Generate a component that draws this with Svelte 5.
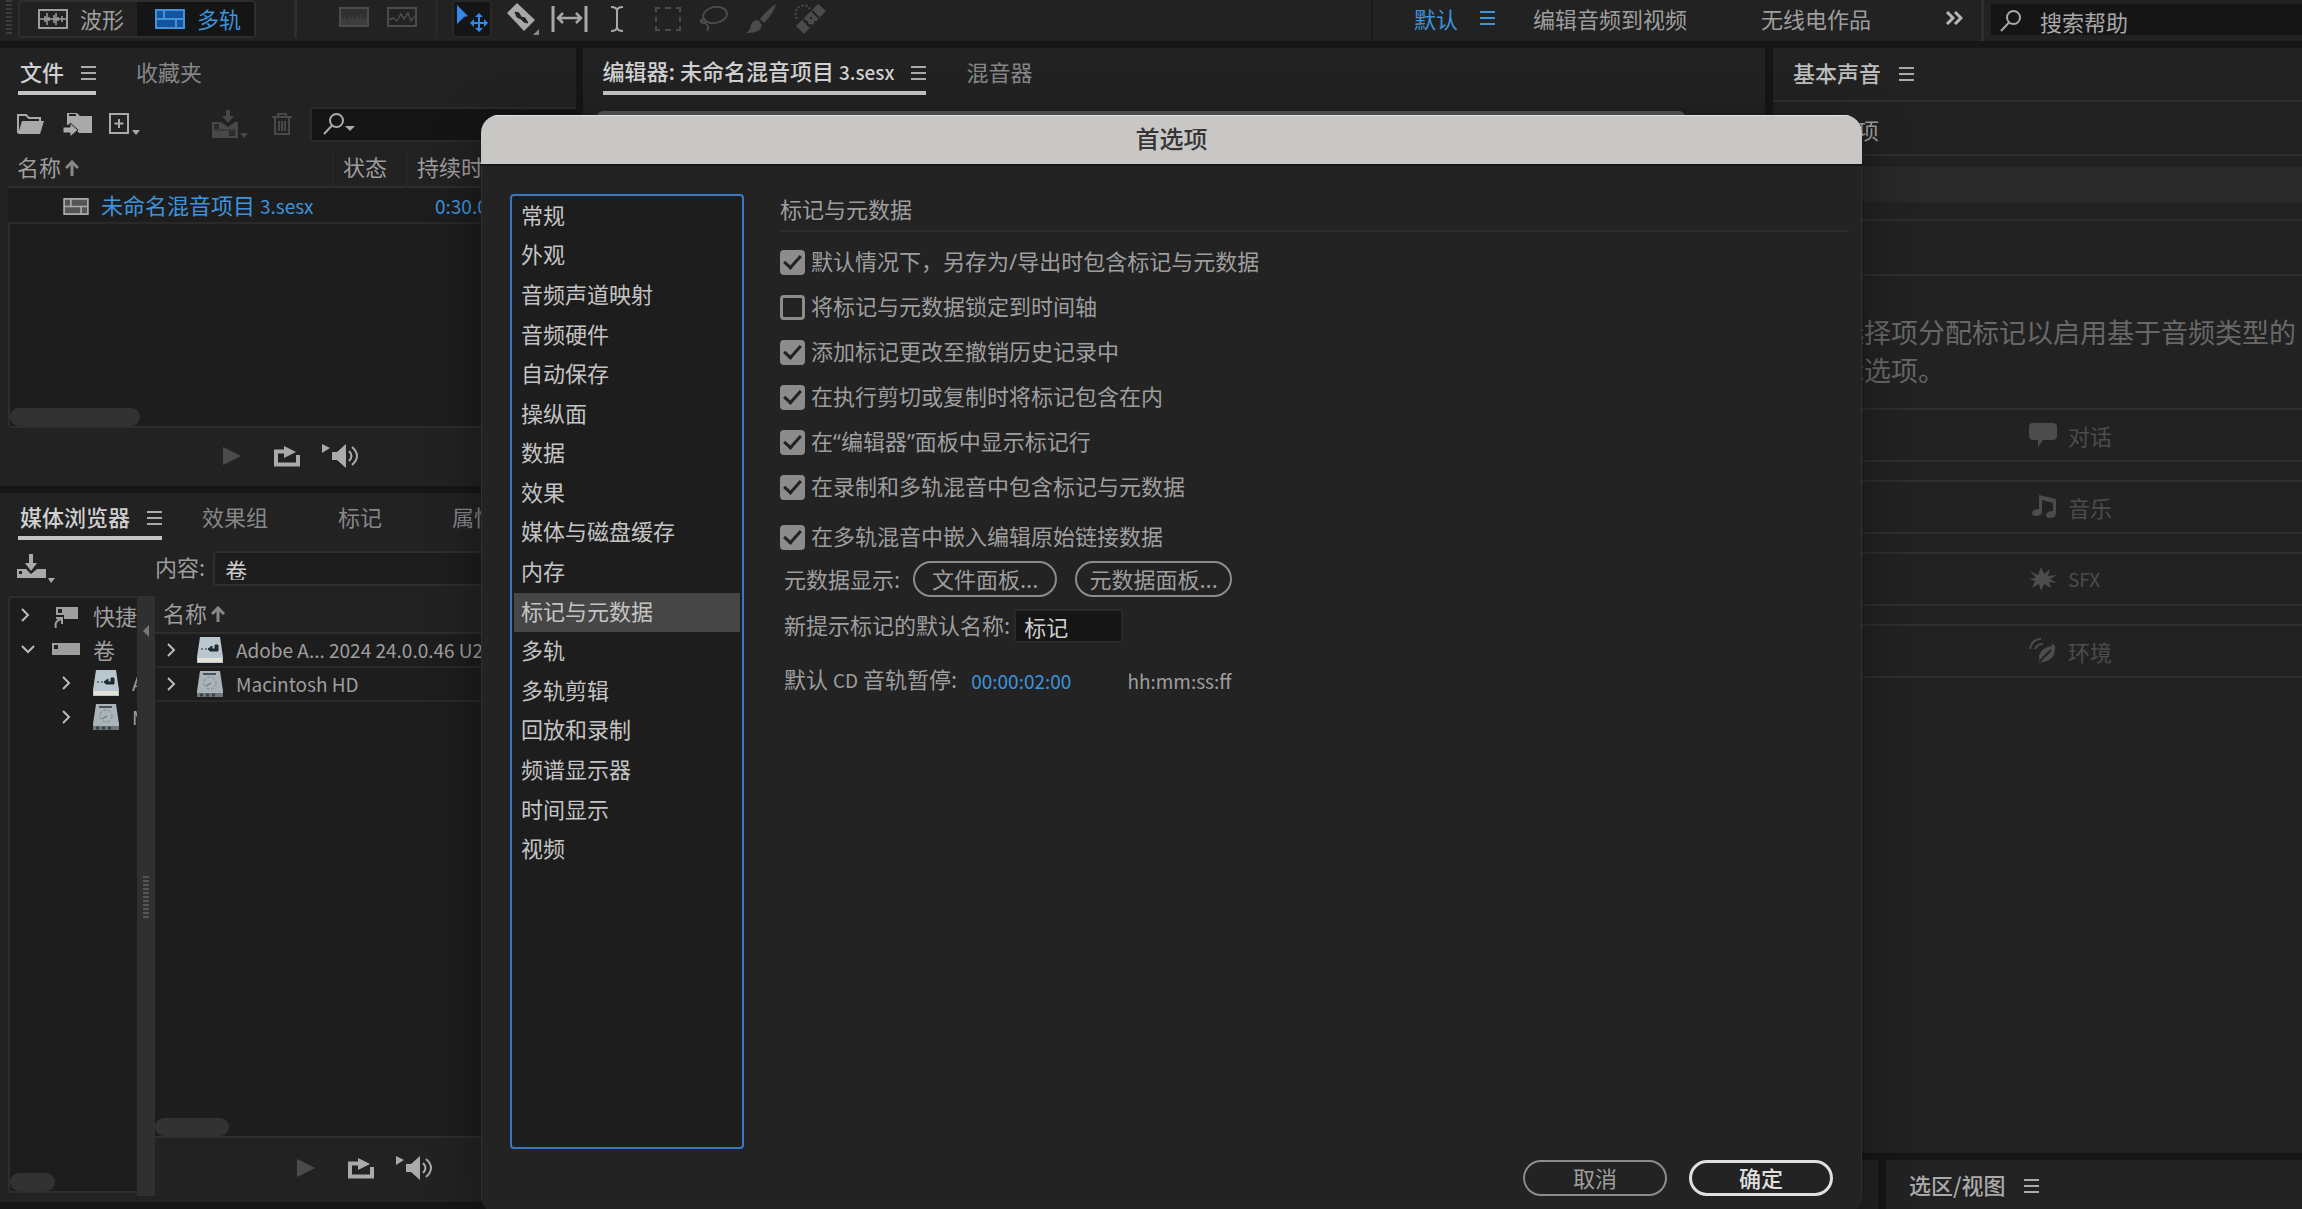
<script lang="ts">
	// Audio workstation window with the preferences dialog open
	interface Option {
		id: string;
		text: string;
		checked: boolean;
	}

	const categories = [
		'常规',
		'外观',
		'音频声道映射',
		'音频硬件',
		'自动保存',
		'操纵面',
		'数据',
		'效果',
		'媒体与磁盘缓存',
		'内存',
		'标记与元数据',
		'多轨',
		'多轨剪辑',
		'回放和录制',
		'频谱显示器',
		'时间显示',
		'视频'
	];

	let selected = $state('标记与元数据');

	let options: Option[] = $state([
		{ id: 'save-markers', text: '默认情况下，另存为/导出时包含标记与元数据', checked: true },
		{ id: 'lock-timeline', text: '将标记与元数据锁定到时间轴', checked: false },
		{ id: 'undo-history', text: '添加标记更改至撤销历史记录中', checked: true },
		{ id: 'cut-copy', text: '在执行剪切或复制时将标记包含在内', checked: true },
		{ id: 'marker-row', text: '在“编辑器”面板中显示标记行', checked: true },
		{ id: 'record-mixdown', text: '在录制和多轨混音中包含标记与元数据', checked: true },
		{ id: 'embed-link', text: '在多轨混音中嵌入编辑原始链接数据', checked: true }
	]);

	let markerName = $state('标记');

	const soundTypes = [
		{ icon: 'dialogue', label: '对话' },
		{ icon: 'music', label: '音乐' },
		{ icon: 'sfx', label: 'SFX' },
		{ icon: 'ambience', label: '环境' }
	];
</script>

{#snippet menu()}
	<svg class="menu" width="15" height="14" viewBox="0 0 15 14" stroke="currentColor" stroke-width="2">
		<path d="M0 1h15M0 7h15M0 13h15" />
	</svg>
{/snippet}

{#snippet tracks(fill: string)}
	<svg width="30" height="20" viewBox="0 0 30 20">
		<rect width="30" height="20" fill="currentColor" />
		<path d="M2 2h6v7H2zM10 2h18v7H10zM2 11h18v7H2zM22 11h6v7h-6z" {fill} />
	</svg>
{/snippet}

{#snippet magnifier()}
	<svg width="22" height="22" viewBox="0 0 22 22" fill="none" stroke="currentColor" stroke-width="2">
		<circle cx="13.500" cy="7.500" r="6.500" />
		<path d="M9 12.500 1 21" />
	</svg>
{/snippet}

{#snippet sortArrow()}
	<svg class="sort" width="14" height="16" viewBox="0 0 14 16" fill="none" stroke="currentColor" stroke-width="3">
		<path d="M7 16V2M1 8l6-6 6 6" />
	</svg>
{/snippet}

{#snippet chevron(open: boolean)}
	<svg class="chevron" width="14" height="14" viewBox="0 0 14 14" fill="none" stroke="currentColor" stroke-width="2">
		{#if open}
			<path d="M1 4l6 6 6-6" />
		{:else}
			<path d="M1 1l6 6-6 6" />
		{/if}
	</svg>
{/snippet}

{#snippet disk(kind: string)}
	<svg class="disk" width="26" height="27" viewBox="0 0 26 27">
		<path d="M3 0h20l3 20v6H0v-6z" fill={kind === 'image' ? '#b9c6cd' : '#a9b3b8'} />
		{#if kind === 'image'}
			<path d="M1 21h24v4H1z" fill="#e4e3d6" />
			<path d="M4 12h2M8 12h2M11 12l4-3v3h3V8h3v6h-8z" fill="#1d2b33" stroke="#1d2b33" />
		{:else}
			<path d="M6 3h13" stroke="#4b5357" stroke-width="2" />
			<circle cx="13" cy="12" r="6" fill="none" stroke="#7c898f" stroke-dasharray="3 2" />
			<path d="M9 15l5-3" stroke="#5b666b" />
			<path d="M0 22h26v4H0z" fill="#6c767b" />
			<path d="M3 24h3M9 24h3M15 24h3" stroke="#3a4246" stroke-width="3" />
		{/if}
	</svg>
{/snippet}

{#snippet transport()}
	<button aria-label="播放" class="dim">
		<svg width="18" height="18" viewBox="0 0 18 18" fill="currentColor"><path d="M0 0l18 9-18 9z" /></svg>
	</button>
	<button aria-label="循环播放" class="loop">
		<svg width="26" height="21" viewBox="0 0 26 21">
			<path d="M11 5.500H2v13h22V9" fill="none" stroke="currentColor" stroke-width="4" />
			<path d="M10 0l12 6-12 6z" fill="currentColor" />
		</svg>
	</button>
	<button aria-label="自动播放">
		<svg width="38" height="24" viewBox="0 0 38 24" fill="currentColor">
			<path d="M0 0l8 4-8 5zM10 8h5l9-8v24l-9-8h-5z" />
			<path d="M27 7q5 5 0 10M30 3q10 9 0 18" fill="none" stroke="currentColor" stroke-width="2" />
		</svg>
	</button>
{/snippet}

<div class="app">
	<header class="topbar">
		<span class="grip"></span>
		<div class="modes">
			<button>
				<svg width="30" height="20" viewBox="0 0 30 20" fill="none" stroke="currentColor">
					<path d="M1 1h28v18H1z" stroke-width="2" />
					<path d="M2 10h26M7 7v6M9 4v12M11 8v4M16 6v8M18 4v12M20 8v4M24 7v6" stroke-width="1.500" />
				</svg>
				<span>波形</span>
			</button>
			<button class="on">
				{@render tracks('#17539a')}
				<span>多轨</span>
			</button>
		</div>
		<div class="views">
			<svg width="30" height="20" viewBox="0 0 30 20">
				<path d="M1 1h28v18H1z" fill="#3d3d3d" stroke="currentColor" stroke-width="2" />
				<path d="M2 2h26v5l-2 6-1-5-2 6-1-7-2 5-2-5-2 7-2-7-2 6-2-4-2 5-2-6-2 5-2-4z" fill="#303030" />
			</svg>
			<svg width="30" height="20" viewBox="0 0 30 20" fill="none" stroke="currentColor">
				<path d="M1 1h28v18H1z" stroke-width="2" />
				<path d="M2 13l4-2 4 3 4-7 3 5 4-6 3 8 3-4h2" stroke-width="1.500" />
			</svg>
		</div>
		<div class="tools">
			<button class="tool move" aria-label="移动工具">
				<svg width="32" height="28" viewBox="0 0 32 28" fill="currentColor">
					<path d="M1 0l11 11-4 1-7 7zM23 8l4 4h-3v5h4v-3l4 4-4 4v-3h-4v4h3l-4 4-4-4h3v-4h-4v3l-4-4 4-4v3h4v-5h-3z" />
				</svg>
			</button>
			<button class="tool" aria-label="切断工具">
				<svg width="34" height="32" viewBox="0 0 34 32">
					<path d="M10 0l18 17-11 11L0 10z" fill="currentColor" />
					<path d="M8 9l4 1 2 4 4 1 3 5-4-1-3-3-4-2z" fill="#222" stroke="#222" />
					<path d="M32 26v6h-6z" fill="#888" />
				</svg>
			</button>
			<button class="tool" aria-label="滑动工具">
				<svg width="37" height="26" viewBox="0 0 37 26" fill="none" stroke="currentColor" stroke-width="2">
					<path d="M2 0v26M35 0v26" stroke-width="3" />
					<path d="M7 12h23M12 7l-5 5 5 5M25 7l5 5-5 5" stroke-width="2.500" />
				</svg>
			</button>
			<button class="tool" aria-label="时间选择工具">
				<svg width="14" height="26" viewBox="0 0 14 26" fill="none" stroke="currentColor" stroke-width="2">
					<path d="M1 1q6 0 6 4 0-4 6-4M7 4v18M1 25q6 0 6-4 0 4 6 4" />
				</svg>
			</button>
			<button class="tool off" aria-label="框选工具">
				<svg width="26" height="24" viewBox="0 0 26 24" fill="none" stroke="currentColor" stroke-width="2">
					<path d="M1 5V1h4M10 1h6M21 1h4v4M25 10v5M25 19v4h-4M16 23h-6M5 23H1v-4M1 15v-5" />
				</svg>
			</button>
			<button class="tool off" aria-label="套索选择工具">
				<svg width="29" height="26" viewBox="0 0 29 26" fill="none" stroke="currentColor" stroke-width="2">
					<ellipse cx="16" cy="9" rx="12" ry="8" transform="rotate(-10 16 9)" />
					<path d="M3 13q-3 3 1 4 4 0 2-3-3-1-3 2M6 17q5 3 2 8" />
				</svg>
			</button>
			<button class="tool off" aria-label="画笔选择工具">
				<svg width="30" height="30" viewBox="0 0 30 30" fill="currentColor">
					<path d="M30 0q-2 9-12 19l-4-4Q22 5 30 0zM12 16l4 5q-2 9-16 8 4-2 5-8 2-5 7-5z" />
				</svg>
			</button>
			<button class="tool off" aria-label="污点修复工具">
				<svg width="32" height="30" viewBox="0 0 32 30">
					<path d="M24 0l8 7L10 30l-8-8z" fill="currentColor" />
					<path d="M18 7l7 7M9 15l7 8" stroke="#222" stroke-width="2" />
					<path d="M17 13v2M21 17v2M13 17v2M17 20v2" stroke="#222" stroke-width="2" />
					<path d="M3 15Q-1 5 7 2q6-2 9 3" fill="none" stroke="currentColor" stroke-width="2" stroke-dasharray="2 2" />
				</svg>
			</button>
		</div>
		<nav class="workspaces">
			<button class="current">默认 {@render menu()}</button>
			<button>编辑音频到视频</button>
			<button>无线电作品</button>
			<button aria-label="更多工作区" class="more">
				<svg width="18" height="14" viewBox="0 0 18 14" fill="none" stroke="currentColor" stroke-width="3">
					<path d="M2 1l6 6-6 6M10 1l6 6-6 6" />
				</svg>
			</button>
		</nav>
		<label class="help">
			{@render magnifier()}
			<input type="text" placeholder="搜索帮助" aria-label="搜索帮助" />
		</label>
	</header>

	<main class="workspace">
		<div class="left">
			<section class="panel files">
				<div class="tabs">
					<button class="tab active"><span>文件</span> {@render menu()}</button>
					<button class="tab">收藏夹</button>
				</div>
				<div class="toolbar">
					<button aria-label="打开文件">
						<svg width="27" height="21" viewBox="0 0 27 21">
							<path d="M1 19V1h8l3 3h11v4" fill="none" stroke="currentColor" stroke-width="2" />
							<path d="M5 7h22l-4 13H1z" fill="currentColor" />
						</svg>
					</button>
					<button aria-label="导入文件" class="import">
						<svg width="30" height="25" viewBox="0 0 30 25">
							<path d="M4 1h10l3 3h12v17H16l-8-9-4 1z" fill="currentColor" />
							<path d="M6 3h7" stroke="#222" stroke-width="2" />
							<path d="M0 15h7v-4l8 7-8 7v-4H0z" fill="currentColor" stroke="#222" />
						</svg>
					</button>
					<button aria-label="新建文件" class="new">
						<svg width="31" height="22" viewBox="0 0 31 22">
							<path d="M1 1h18v19H1zM10 6v9M5.500 10.500h9" fill="none" stroke="currentColor" stroke-width="2" />
							<path d="M23 17h8l-4 5z" fill="currentColor" />
						</svg>
					</button>
					<button aria-label="插入到多轨混音中" class="insert" disabled>
						<svg width="36" height="28" viewBox="0 0 36 28">
							<path d="M0 12h9l7 5 7-5h3v16H0z" fill="currentColor" />
							<path d="M2 14h5v5H2zM17 21h6v5h-6z" fill="#2b2b2b" />
							<path d="M2 20h22" stroke="#2b2b2b" />
							<path d="M14 0h4v6h4l-6 7-6-7h4zM28 23h8l-4 5z" fill="currentColor" />
						</svg>
					</button>
					<button aria-label="删除" class="trash" disabled>
						<svg width="20" height="22" viewBox="0 0 20 22" fill="none" stroke="currentColor" stroke-width="2">
							<path d="M0 4h20M6 4V1h8v3M3 4v17h14V4M7 8v10M10 8v10M13 8v10" />
						</svg>
					</button>
					<label class="filter">
						{@render magnifier()}
						<span class="caret"></span>
						<input type="text" aria-label="筛选文件" />
					</label>
				</div>
				<table class="file-table">
					<thead>
						<tr>
							<th class="col-name">名称{@render sortArrow()}</th>
							<th class="col-status">状态</th>
							<th>持续时间</th>
						</tr>
					</thead>
					<tbody>
						<tr>
							<td class="session">
								<span class="file-icon">{@render tracks('#555')}</span>未命名混音项目
								<span class="latin">3.sesx</span>
							</td>
							<td></td>
							<td class="duration"><span class="latin">0:30.000</span></td>
						</tr>
					</tbody>
				</table>
				<div class="list-space"><span class="thumb"></span></div>
				<div class="transport">{@render transport()}</div>
			</section>

			<section class="panel media">
				<div class="tabs">
					<button class="tab active"><span>媒体浏览器</span> {@render menu()}</button>
					<button class="tab">效果组</button>
					<button class="tab wide">标记</button>
					<button class="tab wide">属性</button>
				</div>
				<div class="content-row">
					<button aria-label="添加快捷方式">
						<svg width="38" height="29" viewBox="0 0 38 29">
							<path d="M0 15h9l5 5 6-5h9v9H0z" fill="currentColor" />
							<path d="M12 0h4v9h4l-6 8-6-8h4z" fill="currentColor" />
							<path d="M2 17h3v3H2z" fill="#222" />
							<path d="M31 24h7l-4 5z" fill="currentColor" />
						</svg>
					</button>
					<label for="volume">内容:</label>
					<select id="volume">
						<option>卷</option>
					</select>
				</div>
				<div class="browser">
					<div class="tree-box">
						<ul class="tree">
							<li>
								{@render chevron(false)}
								<svg class="node shortcut" width="24" height="21" viewBox="0 0 24 21">
									<path d="M2 0h22v12H10V8H2z" fill="currentColor" />
									<path d="M4 2h4v4H4z" fill="#222" />
									<path d="M2 21q-2-7 5-9M2 11h6v6" fill="none" stroke="currentColor" stroke-width="2" />
								</svg>
								快捷方式
							</li>
							<li>
								{@render chevron(true)}
								<svg class="node" width="28" height="12" viewBox="0 0 28 12">
									<path d="M0 0h28v12H0z" fill="currentColor" />
									<path d="M2 2h4v4H2z" fill="#222" />
								</svg>
								卷
							</li>
							<li class="child">{@render chevron(false)}{@render disk('image')}<span class="latin">Adobe</span></li>
							<li class="child">{@render chevron(false)}{@render disk('drive')}<span class="latin">Macintosh HD</span></li>
						</ul>
						<span class="thumb"></span>
					</div>
					<div class="splitter">
						<svg width="6" height="12" viewBox="0 0 6 12"><path d="M6 0v12L0 6z" fill="#777" /></svg>
						<span class="grip"></span>
					</div>
					<div class="volumes">
						<table>
							<thead>
								<tr><th>名称{@render sortArrow()}</th></tr>
							</thead>
							<tbody>
								<tr>
									<td>
										<span class="cell">
											{@render chevron(false)}{@render disk('image')}
											<span class="latin">Adobe A... 2024 24.0.0.46 U2B</span>
										</span>
									</td>
								</tr>
								<tr>
									<td>
										<span class="cell">
											{@render chevron(false)}{@render disk('drive')}
											<span class="latin">Macintosh HD</span>
										</span>
									</td>
								</tr>
							</tbody>
						</table>
						<div class="list-space"><span class="thumb"></span></div>
						<div class="transport">{@render transport()}</div>
					</div>
				</div>
			</section>
		</div>

		<div class="right">
			<div class="upper">
				<section class="panel editor">
					<div class="tabs">
						<button class="tab active">
							<span>编辑器: 未命名混音项目 <span class="latin">3.sesx</span></span>
							{@render menu()}
						</button>
						<button class="tab">混音器</button>
					</div>
					<div class="overview"></div>
				</section>
				<section class="panel sound">
					<h2><span>基本声音</span> {@render menu()}</h2>
					<p class="selection">无选择项</p>
					<div class="preset"><div class="preset-bar"></div></div>
					<div class="blank"></div>
					<p class="hint">为选择项分配标记以启用基于音频类型的<br />编辑选项。</p>
					<div class="types">
						{#each soundTypes as type}
							<button disabled>
								<svg width="28" height="26" viewBox="0 0 28 26" fill="currentColor">
									{#if type.icon === 'dialogue'}
										<path d="M4 1h20q4 0 4 4v9q0 4-4 4H14l-5 7v-7H4q-4 0-4-4V5q0-4 4-4z" />
									{:else if type.icon === 'music'}
										<path d="M10 1l17 4v15q-1 4-6 4-4 0-4-3 1-4 7-4V9l-11-3v13q-1 3-6 3-4 0-4-3 1-4 7-4z" />
									{:else if type.icon === 'sfx'}
										<path d="M12 1l3 7 6-5-2 7 9-1-7 4 7 4-8-1 2 6-7-4-3 7-2-7-7 4 3-7-6-2 7-1-6-7 8 4z" />
									{:else}
										<path d="M23 5l3 3q1 14-12 16l-5 1 1-3q-1-12 13-14z" />
										<path d="M10 24L22 12" stroke="#222" stroke-width="2" />
										<path d="M1 11Q3 1 12 1M6 11q2-5 8-5" fill="none" stroke="currentColor" stroke-width="2" />
									{/if}
								</svg>
								<span class="type-label" class:latin={type.icon === 'sfx'}>{type.label}</span>
							</button>
						{/each}
					</div>
				</section>
			</div>
			<div class="lower">
				<section class="panel levels"></section>
				<section class="panel range"><h2><span>选区/视图</span> {@render menu()}</h2></section>
			</div>
		</div>
	</main>

	<div class="dialog" role="dialog" aria-labelledby="dialog-title">
		<h1 id="dialog-title">首选项</h1>
		<div class="dialog-body">
			<ul class="categories">
				{#each categories as category}
					<li>
						<button class:selected={category === selected} onclick={() => (selected = category)}>
							{category}
						</button>
					</li>
				{/each}
			</ul>
			<div class="settings">
				<h2>标记与元数据</h2>
				<div class="options">
					{#each options as option}
						<div class="option">
							<input type="checkbox" id={option.id} bind:checked={option.checked} />
							<label for={option.id}>{option.text}</label>
						</div>
					{/each}
				</div>
				<div class="field metadata">
					<span class="label">元数据显示:</span>
					<button class="pill">文件面板...</button>
					<button class="pill wide">元数据面板...</button>
				</div>
				<div class="field name">
					<label class="label" for="marker-name">新提示标记的默认名称:</label>
					<input id="marker-name" type="text" bind:value={markerName} />
				</div>
				<div class="field pause">
					<span class="label">默认 <span class="latin">CD</span> 音轨暂停:</span>
					<button class="time latin">00:00:02:00</button>
					<span class="latin">hh:mm:ss:ff</span>
				</div>
			</div>
		</div>
		<footer>
			<button class="pill">取消</button>
			<button class="pill primary">确定</button>
		</footer>
	</div>
</div>

<style>
	:global(body) {
		background: #161616;
	}

	.app {
		--panel: #222;
		--list: #1d1d1d;
		--line: #2e2e2e;
		--text: #9e9e9e;
		--bright: #d0d0d0;
		--blue: #3d94dc;
		position: relative;
		display: flex;
		flex-direction: column;
		height: 100vh;
		overflow: hidden;
		background: #161616;
		color: var(--text);
		font-family: 'Noto Sans CJK SC', 'Noto Sans', sans-serif;
		font-size: 22px;
		line-height: 32px;
		white-space: nowrap;
	}

	.app * {
		box-sizing: border-box;
	}

	button,
	input,
	select {
		margin: 0;
		padding: 0;
		border: 0;
		background: none;
		color: inherit;
		font: inherit;
	}

	h1,
	h2,
	p,
	ul {
		margin: 0;
		padding: 0;
		font: inherit;
		list-style: none;
	}

	svg {
		display: block;
		flex: none;
	}

	/* Latin letters sit smaller beside the Chinese ones */
	.app .latin {
		font-size: 19px;
	}

	/* Top bar */
	.topbar {
		display: flex;
		flex: none;
		height: 41px;
		background: var(--panel);
	}

	.grip {
		width: 6px;
		background: repeating-linear-gradient(#3c3c3c 0 2px, transparent 2px 4px);
	}

	.topbar .grip {
		height: 36px;
		margin-left: 6px;
	}

	.modes {
		display: flex;
		height: 38px;
		margin-left: 6px;
		border: 2px solid var(--line);
		border-radius: 4px;
	}

	.modes button {
		display: flex;
		align-items: center;
		gap: 12px;
		width: 117px;
		padding-left: 18px;
	}

	.modes span {
		padding-bottom: 3px;
	}

	.modes .on {
		background: #151515;
		color: var(--blue);
	}

	.views {
		display: flex;
		align-items: center;
		gap: 18px;
		height: 38px;
		margin-left: 38px;
		padding: 0 18px 4px 42px;
		border-left: 3px solid var(--line);
		border-right: 3px solid #282828;
		color: #4b4b4b;
	}

	.tools {
		display: flex;
		align-items: center;
		height: 38px;
		margin-left: 14px;
	}

	.tool {
		display: flex;
		align-items: center;
		justify-content: center;
		height: 38px;
		margin-right: 18px;
		color: #a8a8a8;
	}

	.tool.move {
		width: 40px;
		margin-right: 15px;
		border: 2px solid #282828;
		border-radius: 4px;
		background: #151515;
		color: #3389e8;
	}

	.tool:nth-child(2) {
		margin-right: 10px;
	}

	.tool:nth-child(3) {
		margin-right: 22px;
	}

	.tool:nth-child(4) {
		margin-right: 31px;
	}

	.tool.off {
		color: #4b4b4b;
	}

	.workspaces {
		display: flex;
		align-items: center;
		gap: 74px;
		margin-left: auto;
		padding: 0 18px 5px 41px;
		border-left: 2px solid #191919;
	}

	.workspaces .current {
		display: flex;
		align-items: center;
		gap: 22px;
		margin-right: -36px;
		color: var(--blue);
	}

	.workspaces .more {
		color: #b5b5b5;
	}

	.help {
		display: flex;
		align-items: center;
		width: 321px;
		border-left: 3px solid var(--line);
		padding-left: 16px;
		background: linear-gradient(#151515, #151515) 7px 4px / 100% 31px no-repeat;
		color: #a8a8a8;
	}

	.help input {
		width: 100%;
		margin-left: 18px;
		outline: none;
	}

	.help input::placeholder {
		color: #a8a8a8;
		opacity: 1;
	}

	/* Panels */
	.workspace {
		display: flex;
		flex: 1;
		gap: 7px;
		min-height: 0;
		padding-top: 7px;
	}

	.panel {
		background: var(--panel);
		overflow: hidden;
	}

	.left {
		display: flex;
		flex: 0 0 25%;
		flex-direction: column;
		gap: 7px;
		min-width: 0;
		padding-bottom: 7px;
	}

	.files,
	.media {
		display: flex;
		flex-direction: column;
	}

	.files {
		flex: 382 1 0;
	}

	.media {
		flex: 618 1 0;
		min-height: 0;
	}

	.tabs {
		display: flex;
		flex: none;
		gap: 38px;
		height: 48px;
		padding: 9px 0 0 18px;
	}

	.tab {
		display: flex;
		align-items: center;
		height: 38px;
		padding: 0 2px 10px;
		color: #878787;
	}

	.tab.active {
		gap: 17px;
		padding: 0 0 2px 2px;
		border-bottom: 4px solid #c4c4c4;
		color: var(--bright);
		font-weight: 500;
	}

	.active > span {
		padding-bottom: 4px;
	}

	.menu {
		color: #aaa;
	}

	.current .menu {
		color: var(--blue);
	}

	.tab.wide {
		margin-left: 28px;
	}

	.toolbar {
		display: flex;
		align-items: center;
		height: 54px;
		padding: 2px 9px 0 17px;
		color: #aaa;
	}

	.toolbar .import {
		margin-left: 19px;
	}

	.toolbar .new {
		margin-left: 16px;
	}

	.toolbar .insert {
		margin-left: 72px;
	}

	.toolbar .trash {
		margin: 0 18px 0 24px;
	}

	.toolbar button:disabled {
		color: #484848;
	}

	.filter {
		display: flex;
		flex: 1;
		align-items: center;
		height: 35px;
		padding-left: 11px;
		border: 2px solid #2a2a2a;
		border-radius: 3px;
		background: #151515;
	}

	.filter input {
		flex: 1;
		min-width: 0;
	}

	.caret {
		border: 5px solid transparent;
		border-top-color: #aaa;
		border-bottom: 0;
		margin-top: 8px;
	}

	table {
		border-collapse: collapse;
		table-layout: fixed;
		width: 100%;
	}

	th,
	td {
		padding: 0;
		overflow: hidden;
		font-weight: 400;
		text-align: left;
	}

	th {
		height: 36px;
		padding-bottom: 4px;
	}

	td {
		height: 34px;
		border-top: 2px solid var(--line);
		border-bottom: 2px solid #292929;
		background: var(--list);
	}

	.sort {
		display: inline-block;
		margin-left: 4px;
		color: #888;
	}

	.file-table {
		margin-left: 8px;
	}

	.file-table th {
		padding-left: 9px;
		border-right: 2px solid #262626;
	}

	.file-table .col-name {
		width: 325px;
	}

	.file-table .col-status {
		width: 74px;
	}

	.file-table td {
		color: var(--blue);
	}

	.file-table .session {
		padding-left: 55px;
	}

	.file-table .duration {
		padding-left: 28px;
	}

	.file-icon {
		display: inline-block;
		margin-right: 12px;
		color: #aaa;
		vertical-align: -1px;
	}

	.file-icon svg {
		width: 26px;
		height: 17px;
	}

	.list-space {
		display: flex;
		flex: 1;
		align-items: flex-end;
		border-bottom: 2px solid var(--line);
		background: var(--list);
	}

	.files .list-space {
		margin-left: 8px;
		border-left: 2px solid var(--line);
		border-radius: 0 0 0 4px;
	}

	.thumb {
		width: 130px;
		height: 18px;
		border-radius: 9px;
		background: #323232;
	}

	.transport {
		display: flex;
		align-items: center;
		gap: 22px;
		height: 58px;
		padding: 0 0 2px 223px;
		color: #aaa;
	}

	.transport .loop {
		margin-left: 11px;
	}

	.transport .dim {
		color: #4b4b4b;
	}

	/* Media browser */
	.content-row {
		display: flex;
		align-items: center;
		height: 54px;
		padding-left: 17px;
	}

	.content-row button {
		color: #aaa;
	}

	.content-row label {
		margin: 0 8px 4px 100px;
	}

	.content-row select {
		flex: 1;
		height: 35px;
		padding: 0 0 4px 10px;
		appearance: none;
		border: 2px solid var(--line);
		border-radius: 3px;
		background: var(--list);
		color: var(--bright);
	}

	.browser {
		display: flex;
		flex: 1;
		min-height: 0;
		padding: 1px 0 6px 8px;
	}

	.tree-box {
		display: flex;
		flex: 0 0 129px;
		flex-direction: column;
		justify-content: space-between;
		margin-bottom: 3px;
		border: 2px solid var(--line);
		border-right: 0;
		border-radius: 4px 0 0 4px;
		background: var(--list);
		overflow: hidden;
	}

	.tree-box .thumb {
		width: 45px;
	}

	.tree li {
		display: flex;
		align-items: center;
		height: 34px;
		padding-left: 11px;
	}

	.tree .chevron {
		margin-right: 17px;
	}

	.tree .node {
		margin-right: 13px;
	}

	.tree .shortcut {
		margin: 4px 15px 0 2px;
	}

	.tree .child {
		padding-left: 52px;
	}

	.chevron {
		color: #bbb;
	}

	.disk {
		margin-right: 13px;
	}

	.splitter {
		display: flex;
		flex: 0 0 18px;
		flex-direction: column;
		align-items: center;
		justify-content: space-between;
		padding: 29px 0 276px;
		background: #303030;
	}

	.splitter .grip {
		height: 44px;
		background: repeating-linear-gradient(#555 0 2px, transparent 2px 4px);
	}

	.volumes {
		display: flex;
		flex: 1;
		flex-direction: column;
		min-width: 0;
		margin-bottom: -6px;
	}

	.volumes th {
		padding-left: 8px;
	}

	.cell {
		display: flex;
		align-items: center;
		padding-left: 12px;
	}

	.cell .chevron {
		margin-right: 16px;
	}

	.volumes .thumb {
		width: 74px;
	}

	.volumes .transport {
		height: 64px;
		padding: 0 0 4px 142px;
	}

	/* Right side */
	.right {
		display: flex;
		flex: 1;
		flex-direction: column;
		gap: 7px;
		min-width: 0;
	}

	.upper,
	.lower {
		display: flex;
		gap: 8px;
	}

	.upper {
		flex: 1;
	}

	.lower {
		height: 49px;
	}

	.editor,
	.levels {
		flex: 1;
	}

	.editor .tabs {
		padding-left: 20px;
	}

	.editor .active {
		padding-left: 0;
	}

	.overview {
		height: 24px;
		margin: 15px 80px 0 14px;
		border-radius: 6px 6px 0 0;
		background: #555;
	}

	.sound {
		flex: 0 0 529px;
	}

	.sound h2,
	.range h2 {
		display: flex;
		align-items: center;
		gap: 18px;
		height: 52px;
		padding-left: 20px;
		color: #bdbdbd;
		font-weight: 500;
	}

	.sound h2 span,
	.range h2 span {
		padding-bottom: 4px;
	}

	.sound .selection {
		height: 54px;
		padding: 11px 0 0 18px;
		border-top: 2px solid var(--line);
	}

	.preset {
		height: 65px;
		padding-top: 11px;
		border-top: 2px solid var(--line);
	}

	.preset-bar {
		height: 35px;
		background: #292929;
	}

	.blank {
		height: 57px;
		border-top: 2px solid var(--line);
		border-bottom: 2px solid var(--line);
	}

	.hint {
		height: 132px;
		padding: 37px 0 0 37px;
		color: #686868;
		font-size: 27px;
		line-height: 38px;
	}

	/* The sound type rows run past the window's right edge */
	.types {
		display: grid;
		gap: 18px;
		margin-right: -66px;
	}

	.types button {
		display: flex;
		align-items: center;
		justify-content: center;
		gap: 11px;
		height: 54px;
		border: solid var(--line);
		border-width: 2px 0;
		color: #4c4c4c;
	}

	.type-label {
		width: 44px;
		text-align: left;
	}

	.range {
		flex: 0 0 416px;
	}

	.range h2 {
		padding-left: 23px;
		color: #aaa;
	}

	/* Preferences dialog */
	.dialog {
		position: absolute;
		top: 115px;
		right: 440px;
		bottom: -5px;
		left: 481px;
		display: flex;
		flex-direction: column;
		border-radius: 18px;
		background: #232323;
		box-shadow: 0 12px 50px rgba(0, 0, 0, 0.4);
		overflow: hidden;
	}

	.dialog h1 {
		flex: none;
		height: 51px;
		border-top: 1px solid #e2e2e0;
		border-bottom: 2px solid #171717;
		background: #c8c7c5;
		color: #353535;
		font-size: 24px;
		font-weight: 500;
		line-height: 44px;
		text-align: center;
	}

	.dialog-body {
		display: flex;
		flex: 1;
		gap: 36px;
		min-height: 0;
		padding: 28px 12px 0 28px;
		border: solid #303030;
		border-width: 0 1px;
	}

	.categories {
		display: grid;
		flex: 0 0 234px;
		grid-template-rows: repeat(17, 1fr) 277px;
		padding: 1px 2px 0;
		border: 2px solid #3a78bd;
		border-radius: 4px;
		background: var(--list);
		color: #c4c4c4;
	}

	.categories li {
		display: flex;
	}

	.categories button {
		flex: 1;
		padding: 0 0 6px 7px;
		text-align: left;
	}

	.categories .selected {
		background: #464646;
	}

	.settings {
		flex: 1;
	}

	.settings h2 {
		height: 38px;
		border-bottom: 2px solid #2d2d2d;
		line-height: 28px;
	}

	.options {
		display: grid;
		gap: 13px;
		padding-top: 14px;
		font-family: 'Noto Sans', 'Noto Sans CJK SC', sans-serif;
	}

	.option {
		display: flex;
		align-items: center;
		gap: 6px;
		height: 32px;
	}

	.option label {
		padding-bottom: 2px;
	}

	.option:last-child {
		height: 38px;
		padding-top: 4px;
	}

	.option input {
		appearance: none;
		width: 25px;
		height: 25px;
		border: 3px solid #8c8c8c;
		border-radius: 4px;
	}

	.option input:checked {
		display: grid;
		place-items: center;
		background: #8c8c8c;
	}

	.option input:checked::before {
		content: '';
		width: 14px;
		height: 7px;
		margin-bottom: 4px;
		border: solid #222;
		border-width: 0 0 3px 3px;
		transform: rotate(-48deg);
	}

	.field {
		display: flex;
		align-items: center;
		padding-left: 4px;
	}

	.label {
		padding-bottom: 3px;
	}

	.metadata {
		gap: 18px;
		padding-top: 7px;
	}

	.metadata .label {
		margin-right: -5px;
	}

	.pill {
		width: 144px;
		height: 36px;
		padding-bottom: 2px;
		border: 2px solid #8c8c8c;
		border-radius: 18px;
		line-height: 28px;
	}

	.pill.wide {
		width: 157px;
	}

	.name {
		gap: 4px;
		padding-top: 11px;
	}

	.name input {
		width: 109px;
		height: 34px;
		padding-left: 8px;
		border: 2px solid #2a2a2a;
		border-radius: 3px;
		background: #151515;
		color: var(--bright);
	}

	.pause {
		gap: 14px;
		padding-top: 19px;
	}

	.time {
		margin-right: 42px;
		color: var(--blue);
	}

	footer {
		display: flex;
		flex: none;
		justify-content: flex-end;
		gap: 22px;
		height: 65px;
		padding: 11px 28px 0;
		border: solid #303030;
		border-width: 0 1px;
	}

	.primary {
		border: 3px solid #e0e0e0;
		color: #e0e0e0;
		font-weight: 500;
	}
</style>
